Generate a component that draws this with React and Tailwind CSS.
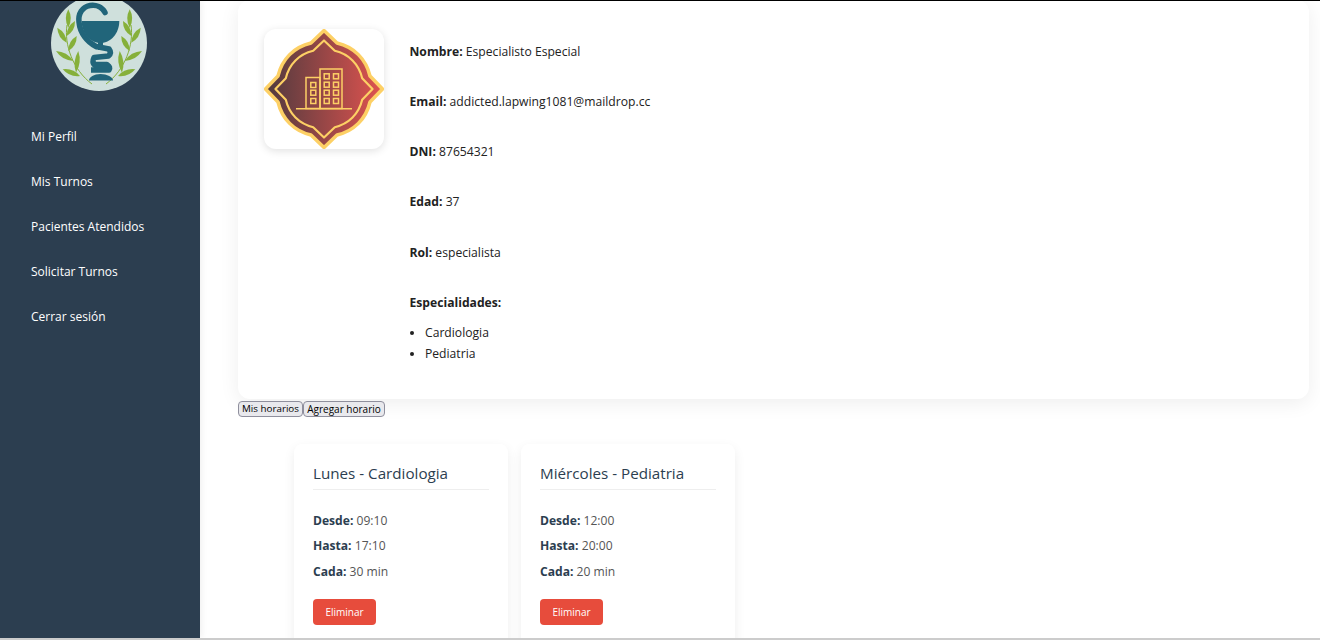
function Leaf({ a, b, w = 5 }) {
  const mx = (a[0] + b[0]) / 2, my = (a[1] + b[1]) / 2;
  const dx = b[0] - a[0], dy = b[1] - a[1];
  const len = Math.hypot(dx, dy) || 1;
  const nx = (-dy / len) * w, ny = (dx / len) * w;
  return <path d={`M${a[0]} ${a[1]}Q${mx + nx} ${my + ny} ${b[0]} ${b[1]}Q${mx - nx} ${my - ny} ${a[0]} ${a[1]}Z`} fill="#86b03a" />;
}

const leaves = [
  [[17.3, 14.3], [17.3, 32.7]], [[6.3, 32.7], [15.7, 47.7]], [[24, 26], [15.7, 41]], [[25.7, 41], [17.3, 56]],
  [[5, 56], [22.3, 66]], [[27.3, 56], [25, 77.7]], [[11.7, 74.3], [29, 81]],
];

function Logo() {
  const t = "#21657a";
  return (
    <svg width="96" height="96" viewBox="0 0 96 96" className="block shrink-0">
      <circle cx="48" cy="48" r="48" fill="#cfe0dc" />
      <path d="M16 30C13 50 22 75 41 89" fill="none" stroke="#86b03a" strokeWidth="1" />
      <path d="M80 30C83 50 74 75 55 89" fill="none" stroke="#86b03a" strokeWidth="1" />
      {leaves.map((l, i) => <Leaf key={i} a={l[0]} b={l[1]} />)}
      {leaves.map((l, i) => <Leaf key={`r${i}`} a={[96 - l[0][0], l[0][1]]} b={[96 - l[1][0], l[1][1]]} />)}
      <path d="M30.7 26H68.3C68.3 38 60 48 49.5 48C39 48 30.7 38 30.7 26Z" fill={t} />
      <rect x="47" y="47" width="5" height="8" fill={t} />
      <path d="M54 17.5C51 12 45 9.5 39 10.5C31 12 27 19 28 27C29 38 36 47 45 51.5" fill="none" stroke={t} strokeWidth="5.5" strokeLinecap="round" />
      <path d="M45 51.5L58 54Q61 58 57.5 61L43 62.5Q41 67 43 69.5L56 69.5Q60 72 58 75L40 75" fill="none" stroke={t} strokeWidth="5.5" strokeLinejoin="round" />
      <path d="M38 85.5C38 82 43 79 49.5 79C56 79 62 82 62 85.5Z" fill={t} />
    </svg>
  );
}

const shape = "M60 1.5L47 14C30 18 18 30 14 47L1.5 60L14 73C18 90 30 102 47 106L60 118.5L73 106C90 102 102 90 106 73L118.5 60L106 47C102 30 90 18 73 14Z";

function Badge() {
  const y = "#fdd065";
  return (
    <svg width="120" height="120" viewBox="0 0 120 120" className="block">
      <defs>
        <linearGradient id="badgeFill" x1="0" x2="1" y1="0" y2="0">
          <stop offset="0" stopColor="#4f3a3e" />
          <stop offset="1" stopColor="#e0534f" />
        </linearGradient>
      </defs>
      <path d={shape} fill="url(#badgeFill)" stroke={y} strokeWidth="3.5" strokeLinejoin="round" />
      <path d={shape} fill="none" stroke={y} strokeWidth="2.6" strokeLinejoin="round" transform="translate(60 60) scale(0.83) translate(-60 -60)" />
      <g fill="none" stroke={y} strokeWidth="1.5">
        <rect x="42" y="48.5" width="14" height="31" />
        <rect x="56" y="40" width="22" height="39.5" />
        <path d="M32 79.7H88" />
        {[56, 63.7, 72].map((v) => <rect key={v} x="46.8" y={v - 2.5} width="5" height="5" />)}
        {[47.3, 55.7, 63.7, 72].map((v) => <rect key={v} x="60.2" y={v - 2.5} width="5" height="5" />)}
        {[47.3, 55.7, 63.7, 72].map((v) => <rect key={`b${v}`} x="69.5" y={v - 2.5} width="5" height="5" />)}
      </g>
    </svg>
  );
}

function Row({ label, value, className = "" }) {
  return (
    <p className={`h-[21px] leading-[21px] ${className}`}>
      <strong className="font-bold">{label}</strong> {value}
    </p>
  );
}

function ScheduleCard({ title, from, to, every }) {
  return (
    <div className="w-[214px] shrink-0 bg-white rounded-lg shadow-[0_4px_12px_rgba(0,0,0,0.07)] pt-[19px] pl-[19px] pr-[19px]">
      <h3 className="text-[15.2px] leading-[20px] font-medium text-[#2c3e50] pb-[6px] border-b border-[#eeeeee]">{title}</h3>
      <div className="mt-[20px] flex flex-col gap-[4.3px] text-[12.1px] leading-[21px] text-[#555555]">
        <p><strong className="font-bold text-[#2c3e50]">Desde:</strong> {from}</p>
        <p><strong className="font-bold text-[#2c3e50]">Hasta:</strong> {to}</p>
        <p className="pt-[0.6px]"><strong className="font-bold text-[#2c3e50]">Cada:</strong> {every}</p>
      </div>
      <button className="mt-[17px] w-[63px] h-[26px] rounded bg-[#e74c3c] text-white text-[10px]">Eliminar</button>
    </div>
  );
}

export default function App() {
  const nav = ["Mi Perfil", "Mis Turnos", "Pacientes Atendidos", "Solicitar Turnos", "Cerrar sesión"];
  return (
    <div className="h-[640px] w-[1320px] overflow-hidden flex flex-col bg-white border-t border-black font-['Open_Sans','Noto_Sans',sans-serif]">
      <div className="flex flex-1 min-h-0 overflow-hidden">
        <aside className="w-[200px] shrink-0 bg-[#2c3e50] shadow-[2px_0_6px_rgba(0,0,0,0.06)] flex flex-col items-center overflow-hidden">
          <div className="-mt-[6px] -ml-[2px]"><Logo /></div>
          <nav className="w-full mt-[23px] pl-[31px] flex flex-col text-[12px] text-white">
            {nav.map((n) => <a key={n} className="h-[45px] leading-[45px]">{n}</a>)}
          </nav>
        </aside>
        <main className="flex-1 min-w-0 pl-[38px] pr-[11px] overflow-hidden text-[#222222]">
          <section className="-mt-[1px] h-[399px] bg-white rounded-xl shadow-[0_4px_20px_rgba(0,0,0,0.07)] pt-[29px] pl-[26px] flex gap-[25.5px]">
            <div className="w-[120px] h-[120px] rounded-xl bg-white shadow-[0_2px_8px_rgba(0,0,0,0.12)] shrink-0"><Badge /></div>
            <div className="text-[12.15px] pt-[12px]">
              <Row label="Nombre:" value="Especialisto Especial" className="mb-[29px]" />
              <Row label="Email:" value="addicted.lapwing1081@maildrop.cc" className="mb-[29px]" />
              <Row label="DNI:" value="87654321" className="mb-[29px]" />
              <Row label="Edad:" value="37" className="mb-[30px]" />
              <Row label="Rol:" value="especialista" className="mb-[29px]" />
              <Row label="Especialidades:" value="" className="mb-[9px]" />
              <ul className="list-disc pl-[15.5px] leading-[21px]">
                <li>Cardiologia</li>
                <li>Pediatria</li>
              </ul>
            </div>
          </section>
          <div className="flex mt-[2px]">
            <button className="h-[16px] w-[65px] rounded-[4px] border border-[#8f8f9d] bg-[#e9e9ed] text-[9.8px] leading-[14px] text-black">Mis horarios</button>
            <button className="h-[16px] w-[82px] rounded-[4px] border border-[#8f8f9d] bg-[#e9e9ed] text-[10px] leading-[14px] text-black">Agregar horario</button>
          </div>
          <div className="flex gap-[13px] mt-[27px] ml-[56px] h-[300px]">
            <ScheduleCard title="Lunes - Cardiologia" from="09:10" to="17:10" every="30 min" />
            <ScheduleCard title="Miércoles - Pediatria" from="12:00" to="20:00" every="20 min" />
          </div>
        </main>
      </div>
      <div className="h-[2px] shrink-0 bg-[#cccccc]" />
    </div>
  );
}
